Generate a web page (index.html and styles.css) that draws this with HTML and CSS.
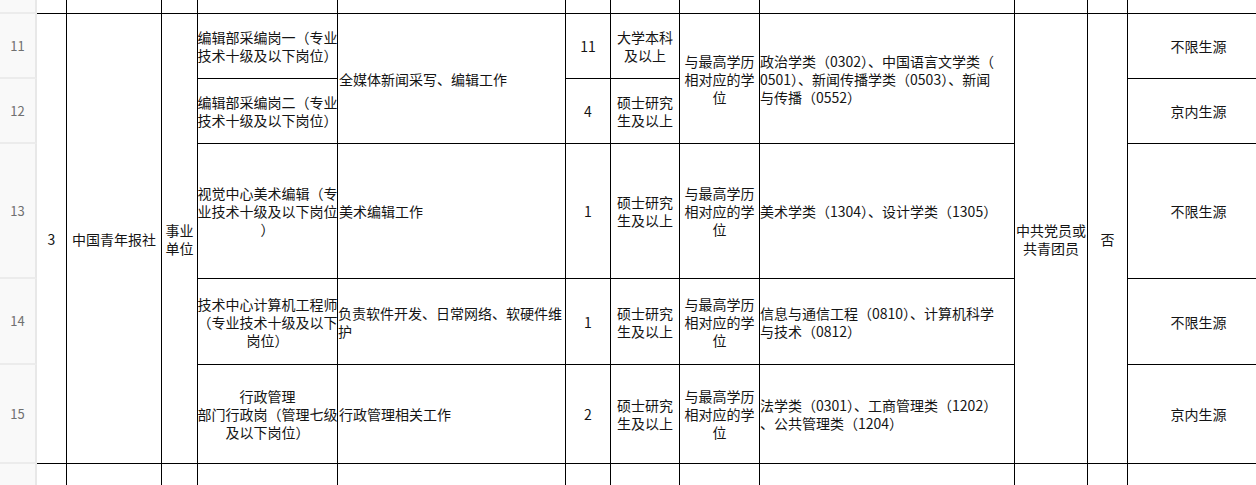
FILE: index.html
```html
<!DOCTYPE html>
<html lang="zh-CN">
<head>
<meta charset="utf-8">
<title>岗位表</title>
<link rel="stylesheet" href="styles.css">
</head>
<body>
<div class="sheet">
  <!-- top partial row -->
  <div class="rh r1"></div>
  <div class="cell r1"></div><div class="cell r1"></div><div class="cell r1"></div><div class="cell r1"></div>
  <div class="cell r1"></div><div class="cell r1"></div><div class="cell r1"></div><div class="cell r1"></div>
  <div class="cell r1"></div><div class="cell r1"></div><div class="cell r1"></div><div class="cell r1"></div>

  <!-- row header numbers -->
  <div class="rh r2">11</div>
  <div class="rh r3">12</div>
  <div class="rh r4">13</div>
  <div class="rh r5">14</div>
  <div class="rh r6">15</div>

  <!-- merged cells rows 11-15 -->
  <div class="cell c2 span5">3</div>
  <div class="cell c3 span5">中国青年报社</div>
  <div class="cell c4 span5 wrap">事业单位</div>
  <div class="cell c11 span5 wrap">中共党员或共青团员</div>
  <div class="cell c12 span5">否</div>

  <!-- row 11 -->
  <div class="cell c5 r2 lines">编辑部采编岗一（专业<br>技术十级及以下岗位）</div>
  <div class="cell c6 span2 left">全媒体新闻采写、编辑工作</div>
  <div class="cell c7 r2">11</div>
  <div class="cell c8 r2 wrap">大学本科及以上</div>
  <div class="cell c9 span2 wrap">与最高学历相对应的学位</div>
  <div class="cell c10 span2 left lines">政治学类（0302）、中国语言文学类（<br>0501）、新闻传播学类（0503）、新闻<br>与传播（0552）</div>
  <div class="cell c13 r2">不限生源</div>

  <!-- row 12 -->
  <div class="cell c5 r3 lines">编辑部采编岗二（专业<br>技术十级及以下岗位）</div>
  <div class="cell c7 r3">4</div>
  <div class="cell c8 r3 wrap">硕士研究生及以上</div>
  <div class="cell c13 r3">京内生源</div>

  <!-- row 13 -->
  <div class="cell c5 r4 lines">视觉中心美术编辑（专<br>业技术十级及以下岗位<br>）</div>
  <div class="cell c6 r4 left">美术编辑工作</div>
  <div class="cell c7 r4">1</div>
  <div class="cell c8 r4 wrap">硕士研究生及以上</div>
  <div class="cell c9 r4 wrap">与最高学历相对应的学位</div>
  <div class="cell c10 r4 left lines">美术学类（1304）、设计学类（1305）</div>
  <div class="cell c13 r4">不限生源</div>

  <!-- row 14 -->
  <div class="cell c5 r5 lines">技术中心计算机工程师<br>（专业技术十级及以下<br>岗位）</div>
  <div class="cell c6 r5 left lines">负责软件开发、日常网络、软硬件维<br>护</div>
  <div class="cell c7 r5">1</div>
  <div class="cell c8 r5 wrap">硕士研究生及以上</div>
  <div class="cell c9 r5 wrap">与最高学历相对应的学位</div>
  <div class="cell c10 r5 left lines">信息与通信工程（0810）、计算机科学<br>与技术（0812）</div>
  <div class="cell c13 r5">不限生源</div>

  <!-- row 15 -->
  <div class="cell c5 r6 lines">行政管理<br>部门行政岗（管理七级<br>及以下岗位）</div>
  <div class="cell c6 r6 left">行政管理相关工作</div>
  <div class="cell c7 r6">2</div>
  <div class="cell c8 r6 wrap">硕士研究生及以上</div>
  <div class="cell c9 r6 wrap">与最高学历相对应的学位</div>
  <div class="cell c10 r6 left lines">法学类（0301）、工商管理类（1202）<br>、公共管理类（1204）</div>
  <div class="cell c13 r6">京内生源</div>

  <!-- bottom partial row -->
  <div class="rh r7"></div>
  <div class="cell r7"></div><div class="cell r7"></div><div class="cell r7"></div><div class="cell r7"></div>
  <div class="cell r7"></div><div class="cell r7"></div><div class="cell r7"></div><div class="cell r7"></div>
  <div class="cell r7"></div><div class="cell r7"></div><div class="cell r7"></div><div class="cell r7"></div>
</div>
</body>
</html>
```

FILE: styles.css
```css
html, body {
  margin: 0;
  padding: 0;
  background: #ffffff;
  overflow: hidden;
}

.sheet {
  display: grid;
  grid-template-columns: 37px 30px 95px 36px 140px 228px 45px 69px 80px 255px 73px 40px 142px;
  grid-template-rows: 14px 65px 65px 135px 86px 99px 40px;
  width: max-content;
  font-family: "Noto Sans CJK SC", "Noto Sans", sans-serif;
  font-size: 14px;
  line-height: 18px;
  color: #141414;
}

.cell {
  box-sizing: border-box;
  border-right: 1px solid #000;
  border-bottom: 1px solid #000;
  display: flex;
  align-items: center;
  justify-content: center;
  text-align: center;
  overflow: hidden;
  padding: 0 1px;
}

.rh {
  grid-column: 1;
  box-sizing: border-box;
  background: #f9f9f9;
  border-right: 2px solid #e8e8e8;
  border-bottom: 2px solid #ececec;
  display: flex;
  align-items: center;
  justify-content: center;
  font-family: "Noto Sans CJK SC", "Noto Sans", sans-serif;
  font-size: 13px;
  color: #707070;
}

.r1 { grid-row: 1; }
.r2 { grid-row: 2; }
.r3 { grid-row: 3; }
.r4 { grid-row: 4; }
.r5 { grid-row: 5; }
.r6 { grid-row: 6; }
.r7 { grid-row: 7; }

.span5 { grid-row: 2 / 7; }
.span2 { grid-row: 2 / 4; }

.c2 { grid-column: 2; }
.c3 { grid-column: 3; }
.c4 { grid-column: 4; }
.c5 { grid-column: 5; }
.c6 { grid-column: 6; }
.c7 { grid-column: 7; }
.c8 { grid-column: 8; }
.c9 { grid-column: 9; }
.c10 { grid-column: 10; }
.c11 { grid-column: 11; }
.c12 { grid-column: 12; }
.c13 { grid-column: 13; }

.lines {
  white-space: nowrap;
  padding: 0;
}

.wrap {
  white-space: normal;
}

.left {
  justify-content: flex-start;
  text-align: left;
}
```
